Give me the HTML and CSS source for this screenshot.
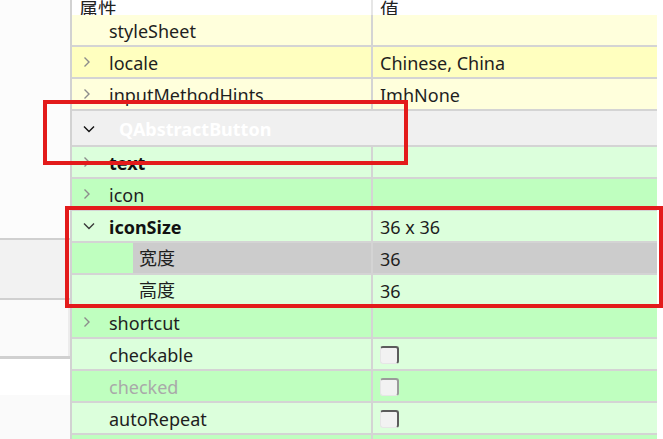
FILE: index.html
```html
<!DOCTYPE html>
<html lang="zh-CN">
<head>
<meta charset="utf-8">
<title>属性编辑器</title>
<link rel="stylesheet" href="styles.css">
</head>
<body>
<div class="app">
  <aside class="side">
    <div class="seg seg1"></div>
    <div class="seg seg2"></div>
    <div class="seg seg3"></div>
    <div class="seg seg4"></div>
    <div class="seg seg5"></div>
  </aside>
  <div class="tree">
    <div class="row head">
      <div class="name"><span class="htext">属性</span></div>
      <div class="val"><span class="htext">值</span></div>
    </div>

    <div class="row y-light">
      <div class="name"><span class="arrow"></span><span class="label">styleSheet</span></div>
      <div class="val"></div>
    </div>
    <div class="row y-dark">
      <div class="name"><span class="arrow"><svg class="chev" width="8" height="12" viewBox="0 0 8 12"><polyline points="1.5,1.5 6,6 1.5,10.5"/></svg></span><span class="label">locale</span></div>
      <div class="val"><span class="vtext">Chinese, China</span></div>
    </div>
    <div class="row y-light">
      <div class="name"><span class="arrow"><svg class="chev" width="8" height="12" viewBox="0 0 8 12"><polyline points="1.5,1.5 6,6 1.5,10.5"/></svg></span><span class="label">inputMethodHints</span></div>
      <div class="val"><span class="vtext">ImhNone</span></div>
    </div>

    <div class="row group">
      <span class="arrow"><svg class="down dark" width="12" height="8" viewBox="0 0 12 8"><polyline points="1,1.5 6,6.5 11,1.5"/></svg></span>
      <span class="gtext">QAbstractButton</span>
    </div>

    <div class="row g-light">
      <div class="name"><span class="arrow"><svg class="chev" width="8" height="12" viewBox="0 0 8 12"><polyline points="1.5,1.5 6,6 1.5,10.5"/></svg></span><span class="label bold">text</span></div>
      <div class="val"></div>
    </div>
    <div class="row g-dark">
      <div class="name"><span class="arrow"><svg class="chev" width="8" height="12" viewBox="0 0 8 12"><polyline points="1.5,1.5 6,6 1.5,10.5"/></svg></span><span class="label">icon</span></div>
      <div class="val"></div>
    </div>
    <div class="row g-light">
      <div class="name"><span class="arrow"><svg class="down" width="12" height="8" viewBox="0 0 12 8"><polyline points="1,1.5 6,6.5 11,1.5"/></svg></span><span class="label bold">iconSize</span></div>
      <div class="val"><span class="vtext">36 x 36</span></div>
    </div>
    <div class="row g-dark sel">
      <div class="name"><span class="indent"></span><span class="label sub">宽度</span></div>
      <div class="val"><span class="vtext">36</span></div>
    </div>
    <div class="row g-light">
      <div class="name"><span class="indent"></span><span class="label sub">高度</span></div>
      <div class="val"><span class="vtext">36</span></div>
    </div>
    <div class="row g-dark">
      <div class="name"><span class="arrow"><svg class="chev" width="8" height="12" viewBox="0 0 8 12"><polyline points="1.5,1.5 6,6 1.5,10.5"/></svg></span><span class="label">shortcut</span></div>
      <div class="val"></div>
    </div>
    <div class="row g-light">
      <div class="name"><span class="arrow"></span><span class="label">checkable</span></div>
      <div class="val"><span class="check"></span></div>
    </div>
    <div class="row g-dark">
      <div class="name"><span class="arrow"></span><span class="label disabled">checked</span></div>
      <div class="val"><span class="check off"></span></div>
    </div>
    <div class="row g-light">
      <div class="name"><span class="arrow"></span><span class="label">autoRepeat</span></div>
      <div class="val"><span class="check"></span></div>
    </div>
    <div class="row g-dark last">
      <div class="name"></div>
      <div class="val"></div>
    </div>
  </div>
</div>
<div class="mark mark1"></div>
<div class="mark mark2"></div>
</body>
</html>
```

FILE: styles.css
```css
html, body {
  margin: 0;
  padding: 0;
  background: #ffffff;
}
body {
  width: 663px;
  height: 439px;
  overflow: hidden;
  position: relative;
  font-family: "Noto Sans", "Noto Sans CJK SC", sans-serif;
  font-size: 18px;
  color: #1e1e1e;
}
.app {
  display: flex;
  height: 439px;
  overflow: hidden;
}
.side {
  width: 70px;
  flex: none;
  display: flex;
  flex-direction: column;
  border-right: 2px solid #d2d2d2;
}
.seg1 { height: 238px; background: #fcfcfc; border-bottom: 2px solid #d0d0d0; }
.seg2 { height: 58px; background: #f2f2f2; border-bottom: 2px solid #d0d0d0; }
.seg3 { height: 56px; background: #fafafa; border-bottom: 3px solid #d0d0d0; box-shadow: inset -2px 0 0 #ececec; }
.seg4 { height: 36px; background: #ffffff; }
.seg5 { flex: 1; background: #fafafa; }

.tree {
  width: 585px;
  flex: none;
  display: flex;
  flex-direction: column;
  overflow: hidden;
}
.row {
  display: flex;
  height: 30px;
  flex: none;
  border-bottom: 2px solid #d4d4d4;
}
.row.last { height: 4px; border-bottom: 0; }
.row .name {
  width: 299px;
  flex: none;
  display: flex;
  align-items: center;
  border-right: 2px solid #d4d4d4;
}
.row .val {
  flex: 1;
  display: flex;
  align-items: center;
  padding-left: 7px;
}
.head {
  height: 15px;
  border-bottom: 0;
  background: #ffffff;
}
.head .name, .head .val {
  align-items: flex-end;
  overflow: hidden;
}
.head .name {
  padding-left: 7px;
  width: 292px;
  border-right-color: #e6e6e6;
}
.htext {
  display: block;
  line-height: 30px;
  margin-bottom: -10px;
  font-size: 19px;
  color: #222;
}
.arrow {
  width: 26px;
  padding-left: 11px;
  flex: none;
  display: flex;
  align-items: center;
}
.chev polyline {
  fill: none;
  stroke: #8c8c8c;
  stroke-width: 1.4;
}
.down polyline {
  fill: none;
  stroke: #3a3a3a;
  stroke-width: 1.4;
}
.down.dark polyline {
  stroke: #111;
}
.label {
  white-space: nowrap;
  line-height: 30px;
  padding-top: 2px;
}
.bold { font-weight: 700; color: #111; }
.disabled { color: #a9a9a9; }
.vtext { white-space: nowrap; line-height: 30px; padding-top: 2px; }

.indent {
  width: 61px;
  flex: none;
  align-self: stretch;
}
.label.sub {
  flex: 1;
  align-self: stretch;
  padding-left: 6px;
  padding-top: 0;
  display: flex;
  align-items: center;
}

.y-light { background: #ffffdc; }
.y-dark { background: #ffffbf; }
.g-light { background: #dcffdc; }
.g-dark { background: #bfffbf; }
.sel .label.sub, .sel .val { background: #cccccc; }

.group {
  height: 34px;
  background: #f0f0f0;
  align-items: center;
}
.group .arrow { padding-top: 1px; }
.gtext {
  margin-left: 10px;
  padding-top: 2px;
  font-weight: 700;
  color: #ffffff;
  white-space: nowrap;
}

.check {
  width: 19px;
  height: 18px;
  margin-top: 2px;
  box-sizing: border-box;
  background: #f2f2f2;
  border-top: 2px solid #5c5c5c;
  border-right: 2px solid #5c5c5c;
  border-left: 1px solid #e6e6e6;
  border-bottom: 1px solid #e6e6e6;
  border-radius: 3px;
}
.check.off {
  border-top-color: #9a9a9a;
  border-right-color: #9a9a9a;
}

.mark {
  position: absolute;
  border: 4px solid #e31b1b;
  box-sizing: border-box;
}
.mark1 { left: 43px; top: 100px; width: 365px; height: 65px; }
.mark2 { left: 65px; top: 206px; width: 598px; height: 102px; }
```
